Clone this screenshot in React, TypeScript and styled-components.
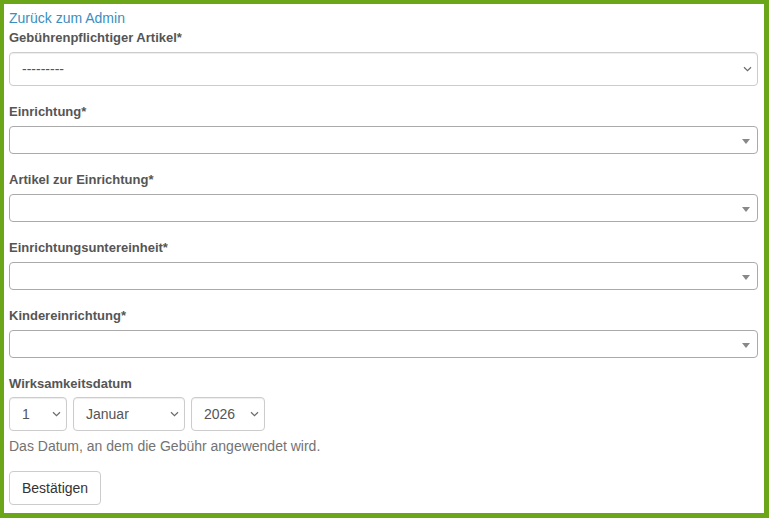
import React from "react";
import styled, { createGlobalStyle } from "styled-components";

const Global = createGlobalStyle`
  html, body { margin: 0; padding: 0; background: #fff; }
  body { font-family: "Liberation Sans", Arial, Helvetica, sans-serif; font-size: 14px; line-height: 1.42857; color: #333; }
  * { box-sizing: border-box; }
`;

const Frame = styled.div`
  width: 769px;
  height: 518px;
  border-style: solid;
  border-color: #6aa617;
  border-width: 4px 5px 5px 4px;
  padding: 3px 6px 0 5px;
  overflow: hidden;
`;

const BackLink = styled.a`
  display: block;
  height: 20px;
  padding-top: 1px;
  color: #3a8ec0;
  text-decoration: none;
  font-size: 14px;
  line-height: 20px;
`;

const Group = styled.div`
  margin-bottom: 15px;
`;

const Label = styled.label<{ $mb?: number }>`
  display: inline-block;
  padding-top: 1px;
  font-size: 13px;
  font-weight: bold;
  color: #555;
  line-height: 20px;
  margin-bottom: ${(p) => (p.$mb ?? 4)}px;
`;

const SelectWrap = styled.div<{ $w?: number }>`
  position: relative;
  width: ${(p) => (p.$w ? `${p.$w}px` : "100%")};
  flex: none;
`;

const NativeSelect = styled.select`
  display: block;
  width: 100%;
  height: 34px;
  padding: 6px 12px;
  font-family: inherit;
  font-size: 14px;
  color: #555;
  background: #fff;
  border: 1px solid #ccc;
  border-radius: 4px;
  box-shadow: inset 0 1px 1px rgba(0, 0, 0, 0.075);
  appearance: none;
  -webkit-appearance: none;
`;

const Chevron = styled.svg`
  position: absolute;
  right: 6px;
  top: 50%;
  margin-top: -3px;
  width: 9px;
  height: 6px;
  pointer-events: none;
`;

const Select2Box = styled.div`
  position: relative;
  height: 28px;
  border: 1px solid #aaa;
  border-radius: 4px;
  background: #fff;
`;

const Select2Arrow = styled.span`
  position: absolute;
  top: 1px;
  right: 1px;
  width: 20px;
  height: 26px;
  &::after {
    content: "";
    position: absolute;
    left: 50%;
    top: 50%;
    margin-left: -4px;
    margin-top: -2px;
    border-style: solid;
    border-color: #888 transparent transparent transparent;
    border-width: 5px 4px 0 4px;
  }
`;

const DateRow = styled.div`
  display: flex;
  gap: 6px;
`;

const Help = styled.p`
  margin: 5px 0 10px;
  color: #737373;
  font-size: 14px;
  line-height: 20px;
`;

const Button = styled.button`
  height: 34px;
  padding: 6px 12px;
  font-family: inherit;
  font-size: 14px;
  line-height: 20px;
  color: #333;
  background: #fff;
  border: 1px solid #ccc;
  border-radius: 4px;
`;

const Select = ({
  w,
  value,
}: {
  w?: number;
  value: string;
}) => (
  <SelectWrap $w={w}>
    <NativeSelect defaultValue={value}>
      <option value={value}>{value}</option>
    </NativeSelect>
    <Chevron viewBox="0 0 9 6">
      <path d="M1 1.2 L4.5 4.6 L8 1.2" fill="none" stroke="#6b6b6b" strokeWidth="1.2" />
    </Chevron>
  </SelectWrap>
);

const Select2Field = ({ label }: { label: string }) => (
  <Group>
    <Label>{label}</Label>
    <Select2Box>
      <Select2Arrow />
    </Select2Box>
  </Group>
);

export default function App() {
  return (
    <>
      <Global />
      <Frame>
        <BackLink href="#">Zurück zum Admin</BackLink>
        <Group>
          <Label>Gebührenpflichtiger Artikel*</Label>
          <Select value="---------" />
        </Group>
        <Select2Field label="Einrichtung*" />
        <Select2Field label="Artikel zur Einrichtung*" />
        <Select2Field label="Einrichtungsuntereinheit*" />
        <Select2Field label="Kindereinrichtung*" />
        <Group>
          <Label $mb={3}>Wirksamkeitsdatum</Label>
          <DateRow>
            <Select w={58} value="1" />
            <Select w={112} value="Januar" />
            <Select w={74} value="2026" />
          </DateRow>
          <Help>Das Datum, an dem die Gebühr angewendet wird.</Help>
        </Group>
        <Button type="button">Bestätigen</Button>
      </Frame>
    </>
  );
}
